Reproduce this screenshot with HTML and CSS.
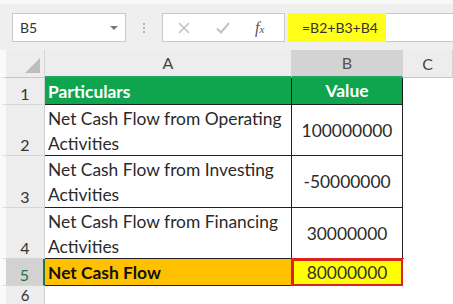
FILE: index.html
```html
<!DOCTYPE html>
<html lang="en">
<head>
    <meta charset="UTF-8">
    <title>Net Cash Flow</title>
    <link rel="stylesheet" href="styles.css">
</head>
<body>
    <div class="toolbar">
        <div class="namebox">
            <span>B5</span>
            <span class="arrow"></span>
        </div>
        <div class="sep">
            <span></span><span></span><span></span>
        </div>
        <div class="fxbox">
            <svg class="icon cancel" width="12" height="12" viewBox="0 0 12 12">
                <path d="M1 1 L11 11 M11 1 L1 11" stroke="#c2c2c2" stroke-width="1.6" fill="none"/>
            </svg>
            <svg class="icon enter" width="14" height="12" viewBox="0 0 14 12">
                <path d="M1 6.5 L5 10.5 L13 1" stroke="#c2c2c2" stroke-width="2" fill="none"/>
            </svg>
            <span class="fx"><i>f</i><i class="sub">x</i></span>
        </div>
        <div class="formula"><span class="hl">=B2+B3+B4</span></div>
    </div>

    <div class="sheet">
        <div class="corner"><span class="tri"></span></div>
        <div class="colhead sel-col">A</div>
        <div class="colhead sel-col active">B</div>
        <div class="colhead">C</div>

        <div class="rowhead">1</div>
        <div class="cell a head">Particulars</div>
        <div class="cell b head center">Value</div>
        <div class="blank"></div>

        <div class="rowhead">2</div>
        <div class="cell a">Net Cash Flow from Operating Activities</div>
        <div class="cell b num">100000000</div>
        <div class="blank"></div>

        <div class="rowhead">3</div>
        <div class="cell a">Net Cash Flow from Investing Activities</div>
        <div class="cell b num">-50000000</div>
        <div class="blank"></div>

        <div class="rowhead">4</div>
        <div class="cell a">Net Cash Flow from Financing Activities</div>
        <div class="cell b num">30000000</div>
        <div class="blank"></div>

        <div class="rowhead current">5</div>
        <div class="cell a total">Net Cash Flow</div>
        <div class="cell b result">80000000</div>
        <div class="blank"></div>

        <div class="rowhead last">6</div>
        <div class="blank"></div>
        <div class="blank"></div>
        <div class="blank"></div>
    </div>
</body>
</html>
```

FILE: styles.css
```css
body {
    margin: 0;
    padding: 0;
    background-color: #ffffff;
    font-family: Lato, "Liberation Sans", sans-serif;
    overflow: hidden;
}
.toolbar {
    display: flex;
    align-items: flex-start;
    height: 50px;
    box-sizing: border-box;
    padding: 9px 0 0 12px;
    background-color: #efefef;
    border-top: 4px solid #f8f8f8;
}
.namebox {
    width: 114px;
    height: 29px;
    box-sizing: border-box;
    background-color: #fff;
    border: 1px solid #c9c9c9;
    display: flex;
    align-items: center;
    justify-content: space-between;
    padding: 0 7px 0 7px;
    font-size: 14px;
    color: #333;
}
.arrow {
    width: 0;
    height: 0;
    border-left: 4px solid transparent;
    border-right: 4px solid transparent;
    border-top: 4px solid #777;
}
.sep {
    width: 36px;
    height: 29px;
    display: flex;
    flex-direction: column;
    align-items: center;
    justify-content: center;
    gap: 2px;
}
.sep span {
    width: 2px;
    height: 2px;
    background-color: #b5b5b5;
}
.fxbox {
    width: 123px;
    height: 29px;
    box-sizing: border-box;
    background-color: #fff;
    border: 1px solid #c9c9c9;
    display: flex;
    align-items: center;
    margin-right: 3px;
}
.cancel {
    margin-left: 15px;
}
.enter {
    margin-left: 26px;
}
.fx {
    margin-left: 25px;
    color: #555;
    font-family: "Liberation Serif", serif;
    font-size: 16px;
    line-height: 1;
}
.fx .sub {
    font-size: 11px;
}
.formula {
    flex: 1;
    height: 29px;
    box-sizing: border-box;
    background-color: #fff;
    border-top: 1px solid #c9c9c9;
    border-bottom: 1px solid #c9c9c9;
    display: flex;
}
.hl {
    width: 98px;
    background-color: #ffff1a;
    margin: -1px 0;
    font-size: 14px;
    color: #333;
    line-height: 30px;
    padding-left: 14px;
    box-sizing: border-box;
}
.sheet {
    display: grid;
    grid-template-columns: 45px 247px 111px 1fr;
    grid-template-rows: 28px 27px 51px 52px 51px 27px 27px;
    font-size: 17.4px;
    color: #2a2a2a;
}
.corner {
    background-color: #ededed;
    border-right: 1px solid #d6d6d6;
    border-bottom: 1px solid #c6c6c6;
    border-left: 6px solid #fafafa;
    position: relative;
}
.tri {
    position: absolute;
    right: 4px;
    bottom: 4px;
    width: 0;
    height: 0;
    border-left: 15px solid transparent;
    border-bottom: 15px solid #bdbdbd;
}
.colhead {
    background-color: #ededed;
    border-right: 1px solid #d2d2d2;
    border-bottom: 1px solid #c6c6c6;
    text-align: center;
    line-height: 27px;
    font-size: 16px;
    color: #444;
}
.colhead:last-child {
    text-align: left;
    padding-left: 35px;
}
.sel-col {
    border-bottom: 2px solid #21a366;
    line-height: 26px;
}
.colhead.active {
    background-color: #d3d3d3;
    color: #555;
}
.rowhead {
    background-color: #ededed;
    border-left: 6px solid #fafafa;
    border-right: 1px solid #d0d0d0;
    border-bottom: 1px solid #d6d6d6;
    display: flex;
    align-items: flex-end;
    justify-content: center;
    padding-bottom: 1px;
    font-size: 16px;
    color: #333;
    box-sizing: border-box;
}
.rowhead.last {
    align-items: flex-start;
    padding-top: 2px;
    line-height: 14px;
    font-size: 15px;
}
.rowhead.current {
    background-color: #d2d2d2;
    color: #217346;
    border-right: 2px solid #217346;
}
.cell {
    border-right: 1px solid #222;
    border-bottom: 1px solid #222;
    box-sizing: border-box;
    line-height: 25px;
}
.cell.a {
    padding: 1px 4px 0 3px;
}
.head {
    background-color: #0fa54f;
    color: #fff;
    font-weight: bold;
    border-right-color: #1a1a1a;
}
.center {
    text-align: center;
}
.num {
    display: flex;
    align-items: center;
    justify-content: center;
}
.total {
    background-color: #ffc000;
    font-weight: bold;
    color: #111;
}
.result {
    background-color: #ffff00;
    outline: 3px solid #e0201a;
    outline-offset: -2px;
    display: flex;
    align-items: center;
    justify-content: center;
    color: #333;
}
.blank {
    background-color: #fff;
}
```
